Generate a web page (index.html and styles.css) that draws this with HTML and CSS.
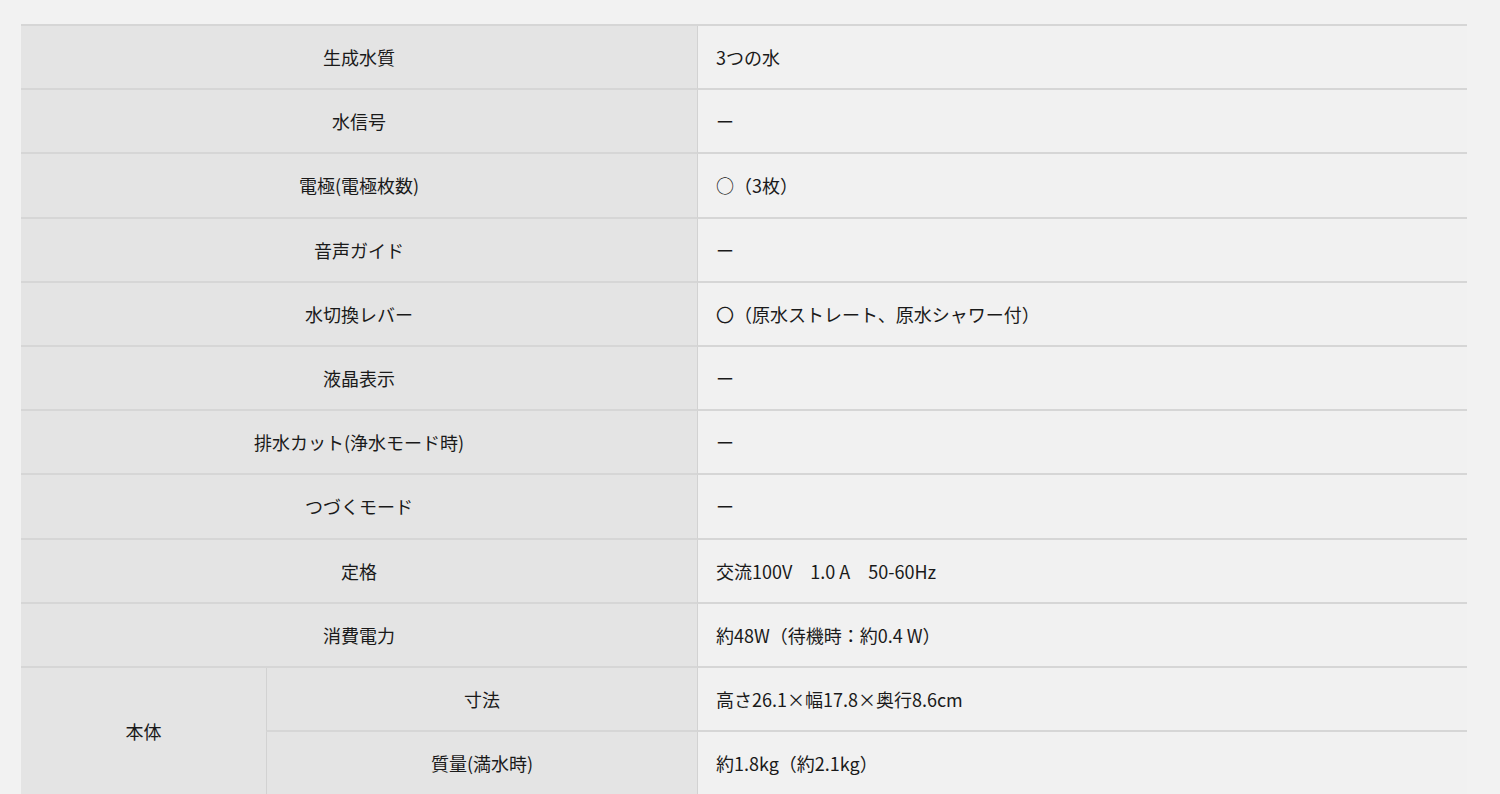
FILE: index.html
```html
<!DOCTYPE html>
<html lang="ja">
<head>
<meta charset="utf-8">
<title>仕様</title>
<link rel="stylesheet" href="styles.css">
</head>
<body>
<div class="wrap">
<table class="spec">
  <colgroup><col class="c1"><col class="c2"><col class="c3"></colgroup>
  <tbody>
    <tr><th colspan="2">生成水質</th><td>3つの水</td></tr>
    <tr><th colspan="2">水信号</th><td>ー</td></tr>
    <tr><th colspan="2">電極(電極枚数)</th><td>○（3枚）</td></tr>
    <tr><th colspan="2">音声ガイド</th><td>ー</td></tr>
    <tr><th colspan="2">水切換レバー</th><td>〇（原水ストレート、原水シャワー付）</td></tr>
    <tr><th colspan="2">液晶表示</th><td>ー</td></tr>
    <tr><th colspan="2">排水カット(浄水モード時)</th><td>ー</td></tr>
    <tr><th colspan="2">つづくモード</th><td>ー</td></tr>
    <tr><th colspan="2">定格</th><td>交流100V　1.0 A　50-60Hz</td></tr>
    <tr><th colspan="2">消費電力</th><td>約48W（待機時：約0.4 W）</td></tr>
    <tr><th rowspan="2" class="group">本体</th><th class="sub">寸法</th><td>高さ26.1×幅17.8×奥行8.6cm</td></tr>
    <tr><th class="sub">質量(満水時)</th><td>約1.8kg（約2.1kg）</td></tr>
  </tbody>
</table>
</div>
</body>
</html>
```
FILE: styles.css
```css
html, body {
  margin: 0;
  padding: 0;
  background: #f2f2f2;
}
body {
  font-family: "Noto Sans CJK JP", "Noto Sans", sans-serif;
  color: #1a1a1a;
  font-size: 18px;
}
.wrap {
  padding: 24px 0 0 21px;
}
.spec {
  width: 1446px;
  border-collapse: separate;
  border-spacing: 0;
  border-top: 2px solid #d6d6d6;
  table-layout: fixed;
}
.c1 { width: 245px; }
.c2 { width: 431px; }
.c3 { width: 770px; }
.spec th,
.spec td {
  height: 62.2px;
  padding: 0;
  border-bottom: 2px solid #d6d6d6;
  font-weight: 400;
  line-height: 26px;
  vertical-align: middle;
}
.spec th {
  background: #e4e4e4;
  text-align: center;
}
.spec th.sub {
  border-left: 1px solid #d2d2d2;
}
.spec td {
  background: #f1f1f1;
  border-left: 1px solid #d2d2d2;
  padding-left: 18px;
  text-align: left;
}
```
